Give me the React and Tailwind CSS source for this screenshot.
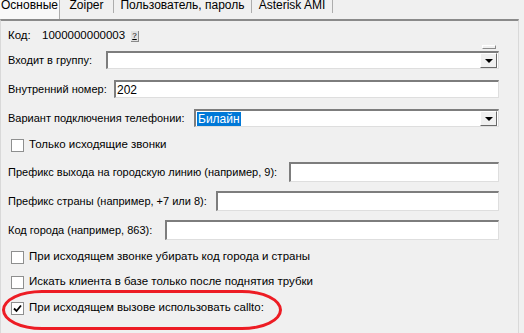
import React from "react";

const font = { fontFamily: '"Liberation Sans", Arial, sans-serif' };

function TextBox({ width, value, combo, selected }) {
    return (
        <div
            className={`relative h-[18px] bg-white border-t-2 border-l-2 border-t-[#7d7d7d] border-l-[#7d7d7d] border-r border-b border-r-[#dedede] border-b-[#dedede] flex items-center ${width}`}
        >
            {value && <span className="pl-[1px] text-[12px] text-black leading-[14px]">{value}</span>}
            {selected && (
                <span className="ml-[1px] px-[1px] text-[12px] leading-[14px] bg-[#0078d7] text-white">
                    {selected}
                </span>
            )}
            {combo && (
                <div className="absolute right-[1px] top-0 w-[17px] h-[15px] bg-[#f0f0f0] border-t border-l border-t-white border-l-white border-r border-b border-r-[#696969] border-b-[#696969] flex items-center justify-center">
                    <div className="w-0 h-0 border-l-[4px] border-r-[4px] border-t-[4px] border-l-transparent border-r-transparent border-t-black" />
                </div>
            )}
        </div>
    );
}

function Field({ label, labelW, inputW, value, combo, selected, tall, mt }) {
    return (
        <div className={`flex items-center ${mt}`}>
            <span className={`shrink-0 whitespace-nowrap ${labelW}`}>{label}</span>
            {tall ? (
                <div className={`h-[20px] bg-white border-t-2 border-l-2 border-t-[#7d7d7d] border-l-[#7d7d7d] border-r border-b border-r-[#dedede] border-b-[#dedede] ${inputW}`} />
            ) : (
                <TextBox width={inputW} value={value} combo={combo} selected={selected} />
            )}
        </div>
    );
}

function Check({ label, checked, mt }) {
    return (
        <div className={`flex items-center h-[14px] pl-[3px] ${mt}`}>
            <div className="w-[13px] h-[13px] bg-white border border-[#8e8f8f] flex items-center justify-center">
                {checked && (
                    <svg width="9" height="9" viewBox="0 0 9 9">
                        <path d="M1 4.5 L3.5 7 L8 1.5" fill="none" stroke="#000" strokeWidth="1.8" />
                    </svg>
                )}
            </div>
            <span className="ml-[5px] whitespace-nowrap text-[11.5px]">{label}</span>
        </div>
    );
}

export default function App() {
    const tabs = [
        { name: "Основные", w: "w-[60px]", active: true },
        { name: "Zoiper", w: "w-[54px]" },
        { name: "Пользователь, пароль", w: "w-[138px]" },
        { name: "Asterisk AMI", w: "w-[81px]" },
    ];

    return (
        <div className="relative w-[524px] h-[333px] bg-[#f0f0f0] overflow-hidden text-[11px] text-black" style={font}>
            {/* tabs */}
            <div className="flex h-[19px] text-[12px]">
                {tabs.map((t) => (
                    <div
                        key={t.name}
                        className={`${t.w} ${t.active ? "h-[19px] bg-[#f9f9f9]" : "h-[13px]"} border-r border-[#adadad] flex justify-center`}
                    >
                        <span className="leading-[14px] mt-[-2px] whitespace-nowrap">{t.name}</span>
                    </div>
                ))}
            </div>

            {/* panel */}
            <div className="h-[314px] w-[519px] border-t-2 border-t-[#8a8a8a] border-l border-l-[#d9d9d9] border-r border-r-[#d9d9d9] pl-[7px] flex flex-col">
                <div className="flex items-center h-[18px] mt-[6px] text-[11.5px]">
                    <span className="w-[34px]">Код:</span>
                    <span className="w-[89px]">1000000000003</span>
                    <div className="w-[8px] h-[11px] bg-[#e1e1e1] border-r border-b border-[#8a8a8a] text-[8px] leading-[10px] text-center underline">?</div>
                </div>

                <Field label="Входит в группу:" labelW="w-[98px]" inputW="w-[393px]" combo mt="mt-[6px]" />
                <Field label="Внутренний номер:" labelW="w-[106px]" inputW="w-[385px]" value="202" mt="mt-[11px]" />
                <Field label="Вариант подключения телефонии:" labelW="w-[186px]" inputW="w-[305px]" combo selected="Билайн" mt="mt-[11px]" />

                <Check label="Только исходящие звонки" mt="mt-[11px]" />

                <Field label="Префикс выхода на городскую линию (например, 9):" labelW="w-[281px]" inputW="w-[210px]" tall mt="mt-[10px]" />
                <Field label="Префикс страны (например, +7 или 8):" labelW="w-[208px]" inputW="w-[283px]" tall mt="mt-[9px]" />
                <Field label="Код города (например, 863):" labelW="w-[157px]" inputW="w-[334px]" tall mt="mt-[9px]" />

                <Check label="При исходящем звонке убирать код города и страны" mt="mt-[10px]" />
                <Check label="Искать клиента в базе только после поднятия трубки" mt="mt-[11px]" />
                <Check label="При исходящем вызове использовать callto:" checked mt="mt-[12px]" />
            </div>

            {/* small control peeking above the group combo */}
            <div className="absolute left-[482px] top-[45px] w-[14px] h-[4px] bg-[#f0f0f0] border-t border-l border-white border-r border-b border-r-[#8a8a8a] border-b-[#8a8a8a]" />

            {/* red highlight */}
            <div className="absolute left-[2px] top-[290px] w-[280px] h-[40px] border-[3px] border-[#ed1c24] rounded-[40px/20px]" />
        </div>
    );
}
